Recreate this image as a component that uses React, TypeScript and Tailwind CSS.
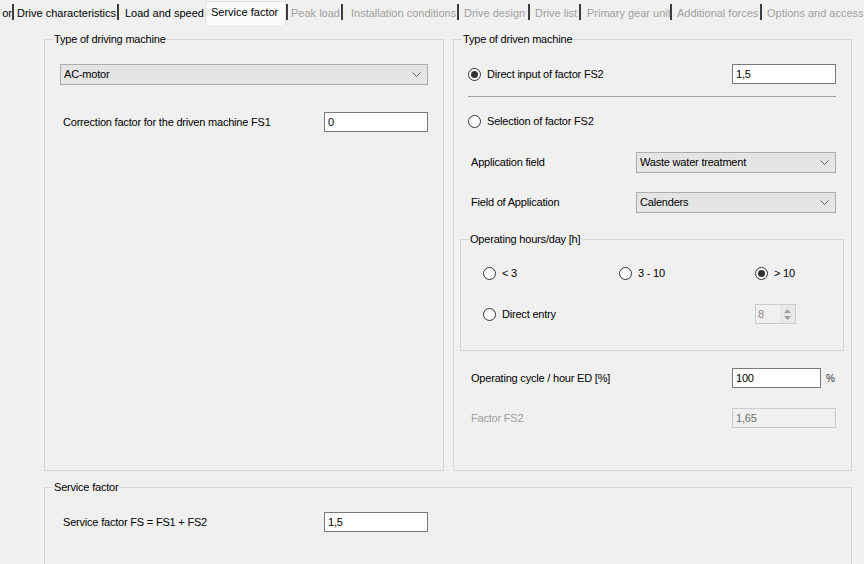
import React from 'react';

function Radio({ checked }: { checked?: boolean }) {
  return (
    <span className="flex h-[13px] w-[13px] shrink-0 items-center justify-center rounded-full border border-[#333333] bg-white">
      {checked && <span className="h-[7px] w-[7px] rounded-full bg-[#333333]" />}
    </span>
  );
}

function RadioLabel({ checked, label }: { checked?: boolean; label: string }) {
  return (
    <div className="flex items-center gap-[6px]">
      <Radio checked={checked} />
      <span className="whitespace-nowrap">{label}</span>
    </div>
  );
}

function TextBox({ value, disabled, narrow }: { value: string; disabled?: boolean; narrow?: boolean }) {
  return (
    <div
      className={`flex h-[20px] items-center border pl-[3px] ${narrow ? 'w-[89px]' : 'w-[104px]'} ${
        disabled ? 'border-[#cccccc] bg-[#f0f0f0] text-[#6d6d6d]' : 'border-[#7a7a7a] bg-white text-black'
      }`}
    >
      {value}
    </div>
  );
}

function Chevron() {
  return (
    <svg width="9" height="5" viewBox="0 0 9 5" className="shrink-0">
      <path d="M0.5 0.5L4.5 4.5L8.5 0.5" fill="none" stroke="#606060" strokeWidth="1" />
    </svg>
  );
}

function Combo({ value, wide }: { value: string; wide?: boolean }) {
  return (
    <div
      className={`flex h-[21px] items-center justify-between border border-[#adadad] bg-[#e5e5e5] pl-[3px] pr-[6px] ${
        wide ? 'w-[368px]' : 'w-[200px]'
      }`}
    >
      <span>{value}</span>
      <Chevron />
    </div>
  );
}

function Group({ title, className, children }: { title: string; className: string; children?: React.ReactNode }) {
  return (
    <div className={`relative border border-[#d8d8d8] ${className}`}>
      <span className="absolute left-[8px] top-[-7px] bg-[#f0f0f0] px-[1px] leading-[13px] whitespace-nowrap">{title}</span>
      {children}
    </div>
  );
}

function Sep() {
  return <span className="mt-[4px] h-[16px] w-[2px] shrink-0 bg-[#3c3c3c]" />;
}

function Tab({ label, w, pl, gray }: { label: string; w: string; pl: string; gray?: boolean }) {
  return (
    <div className={`mt-[3px] flex h-[21px] shrink-0 items-center overflow-hidden whitespace-nowrap ${w} ${pl} ${gray ? 'text-[#a0a0a0]' : 'text-black'}`}>
      {label}
    </div>
  );
}

function TabStrip() {
  return (
    <div className="flex h-[25px] items-start overflow-hidden text-[11px]">
      <div className="mt-[3px] flex h-[21px] w-[12px] shrink-0 items-center justify-end overflow-hidden whitespace-nowrap">or</div>
      <Sep />
      <Tab label="Drive characteristics" w="w-[103px]" pl="pl-[3px]" />
      <Sep />
      <Tab label="Load and speed" w="w-[86px]" pl="pl-[6px]" />
      <div className="mt-[1px] flex h-[24px] w-[81px] shrink-0 items-start border-x border-t border-[#e0e0e0] bg-[#fafafa] pl-[5px] pt-[4px] whitespace-nowrap">
        Service factor
      </div>
      <Sep />
      <Tab label="Peak load" w="w-[53px]" pl="pl-[3px]" gray />
      <Sep />
      <Tab label="Installation conditions" w="w-[114px]" pl="pl-[8px]" gray />
      <Sep />
      <Tab label="Drive design" w="w-[69px]" pl="pl-[5px]" gray />
      <Sep />
      <Tab label="Drive list" w="w-[49px]" pl="pl-[5px]" gray />
      <Sep />
      <Tab label="Primary gear unit" w="w-[89px]" pl="pl-[6px]" gray />
      <Sep />
      <Tab label="Additional forces" w="w-[88px]" pl="pl-[5px]" gray />
      <Sep />
      <Tab label="Options and accessories" w="w-[125px]" pl="pl-[5px]" gray />
    </div>
  );
}

function Spinner() {
  return (
    <div className="flex h-[20px] w-[41px] items-stretch border border-[#cccccc] bg-[#f0f0f0] text-[#8a8a8a]">
      <span className="flex flex-1 items-center pl-[2px]">8</span>
      <div className="flex w-[15px] flex-col items-center justify-center gap-[3px] bg-[#e8e8e8]">
        <svg width="7" height="4" viewBox="0 0 7 4">
          <path d="M0 4L3.5 0L7 4Z" fill="#a0a0a0" />
        </svg>
        <svg width="7" height="4" viewBox="0 0 7 4">
          <path d="M0 0L3.5 4L7 0Z" fill="#a0a0a0" />
        </svg>
      </div>
    </div>
  );
}

export default function App() {
  return (
    <div className="h-[564px] w-[864px] overflow-hidden bg-[#f0f0f0] font-['Liberation_Sans',Arial,sans-serif] text-[11px] leading-[13px] text-black">
      <TabStrip />
      <div className="flex flex-col pl-[44px] pt-[14px] tracking-[-0.2px]">
        <div className="flex h-[432px] gap-[9px]">
          <Group title="Type of driving machine" className="h-full w-[400px]">
            <div className="flex w-[383px] flex-col pl-[15px] pt-[24px]">
              <Combo value="AC-motor" wide />
              <div className="mt-[27px] flex items-center justify-between">
                <span className="ml-[3px]">Correction factor for the driven machine FS1</span>
                <TextBox value="0" />
              </div>
            </div>
          </Group>

          <Group title="Type of driven machine" className="h-full w-[399px]">
            <div className="flex flex-col pl-[14px] pr-[15px] pt-[24px]">
              <div className="flex h-[20px] items-center justify-between">
                <RadioLabel checked label="Direct input of factor FS2" />
                <TextBox value="1,5" />
              </div>
              <div className="mt-[12px] h-[1px] bg-[#a0a0a0]" />
              <div className="mt-[18px] flex h-[13px] items-center">
                <RadioLabel label="Selection of factor FS2" />
              </div>
              <div className="mt-[24px] flex items-center justify-between">
                <span className="ml-[3px]">Application field</span>
                <Combo value="Waste water treatment" />
              </div>
              <div className="mt-[19px] flex items-center justify-between">
                <span className="ml-[3px]">Field of Application</span>
                <Combo value="Calenders" />
              </div>

              <Group title="Operating hours/day [h]" className="-mx-[8px] mt-[26px] h-[112px]">
                <div className="grid grid-cols-[136px_136px_1fr] items-center gap-y-[21px] pl-[22px] pt-[23px]">
                  <div className="flex h-[20px] items-center">
                    <RadioLabel label="< 3" />
                  </div>
                  <div className="flex h-[20px] items-center">
                    <RadioLabel label="3 - 10" />
                  </div>
                  <div className="flex h-[20px] items-center">
                    <RadioLabel checked label="> 10" />
                  </div>
                  <div className="col-span-2 flex h-[20px] items-center">
                    <RadioLabel label="Direct entry" />
                  </div>
                  <div className="flex h-[20px] items-center">
                    <Spinner />
                  </div>
                </div>
              </Group>

              <div className="mt-[17px] flex items-center justify-between">
                <span className="ml-[3px]">Operating cycle / hour ED [%]</span>
                <div className="flex w-[104px] items-center">
                  <TextBox value="100" narrow />
                  <span className="ml-[5px] text-[10px] text-[#333333]">%</span>
                </div>
              </div>
              <div className="mt-[20px] flex items-center justify-between">
                <span className="ml-[3px] text-[#a0a0a0]">Factor FS2</span>
                <TextBox value="1,65" disabled />
              </div>
            </div>
          </Group>
        </div>

        <Group title="Service factor" className="mt-[16px] h-[120px] w-[808px]">
          <div className="flex w-[383px] items-center justify-between pl-[15px] pt-[24px]">
            <span className="ml-[3px]">Service factor FS = FS1 + FS2</span>
            <TextBox value="1,5" />
          </div>
        </Group>
      </div>
    </div>
  );
}
